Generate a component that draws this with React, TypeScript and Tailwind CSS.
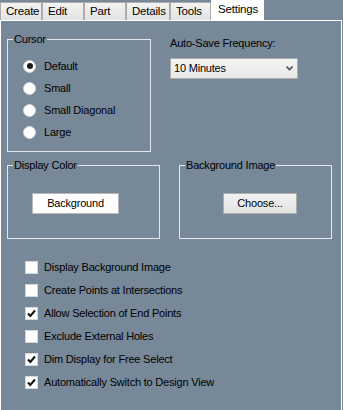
const tabs = [
  { name: 'Create', w: 'w-[42px]' },
  { name: 'Edit', w: 'w-[42px]' },
  { name: 'Part', w: 'w-[42px]' },
  { name: 'Details', w: 'w-[44px]' },
  { name: 'Tools', w: 'w-[41px]' },
]

const cursors = ['Default', 'Small', 'Small Diagonal', 'Large']

const options = [
  { label: 'Display Background Image', checked: false },
  { label: 'Create Points at Intersections', checked: false },
  { label: 'Allow Selection of End Points', checked: true },
  { label: 'Exclude External Holes', checked: false },
  { label: 'Dim Display for Free Select', checked: true },
  { label: 'Automatically Switch to Design View', checked: true },
]

function Radio({ label, selected }: { label: string; selected?: boolean }) {
  return (
    <div className="flex h-[22px] items-center gap-[8px] pl-[15px]">
      <span className="flex h-[13px] w-[13px] items-center justify-center rounded-full border border-[#d4d8dc] bg-white">
        {selected && <span className="h-[6px] w-[6px] rounded-full bg-[#1a1a1a]" />}
      </span>
      <span>{label}</span>
    </div>
  )
}

function Check({ label, checked }: { label: string; checked: boolean }) {
  return (
    <div className="flex h-[23px] items-center gap-[6px]">
      <span className="flex h-[13px] w-[13px] items-center justify-center border border-[#d4d8dc] bg-white">
        {checked && (
          <svg width="9" height="9" viewBox="0 0 9 9">
            <path d="M1 4.5 L3.3 7 L8 1.5" fill="none" stroke="#111" strokeWidth="2" />
          </svg>
        )}
      </span>
      <span>{label}</span>
    </div>
  )
}

function Group({ title, className, children }: { title: string; className: string; children: React.ReactNode }) {
  return (
    <fieldset className={`border border-[#e4e8ec] ${className}`}>
      <legend className="ml-[5px] px-[1px] leading-[13px]">{title}</legend>
      {children}
    </fieldset>
  )
}

export default function App() {
  return (
    <div className="flex h-[410px] w-[343px] flex-col bg-[#778899] font-['Liberation_Sans',Arial,sans-serif] text-[11px] tracking-[-0.2px] text-black">
      <div className="flex h-[20px] items-end">
        {tabs.map((tab) => (
          <div
            key={tab.name}
            className={`${tab.w} h-[18px] border border-b-0 border-[#acacac] bg-gradient-to-b from-[#f3f3f3] to-[#e3e3e3] pl-[5px] text-[11.5px] leading-[17px]`}
          >
            {tab.name}
          </div>
        ))}
        <div className="relative z-10 -mb-px h-[21px] w-[53px] bg-white pl-[7px] text-[11.5px] leading-[18px]">Settings</div>
      </div>

      <div className="flex w-[342px] flex-1 flex-col border-x border-t border-white">
        <div className="ml-[6px] mt-[12px] flex">
          <Group title="Cursor" className="h-[119px] w-[144px]">
            <div className="pt-[9px]">
              {cursors.map((c, i) => (
                <Radio key={c} label={c} selected={i === 0} />
              ))}
            </div>
          </Group>

          <div className="ml-[19px] pt-[4px]">
            <div className="leading-[13px]">Auto-Save Frequency:</div>
            <div className="mt-[8px] flex h-[21px] w-[128px] items-center justify-between border border-[#acacac] bg-gradient-to-b from-[#f4f4f4] to-[#e8e8e8] pl-[3px] pr-[4px]">
              <span>10 Minutes</span>
              <svg width="7" height="5" viewBox="0 0 7 5">
                <path d="M0.5 0.5 L3.5 3.5 L6.5 0.5" fill="none" stroke="#555" strokeWidth="1.6" />
              </svg>
            </div>
          </div>
        </div>

        <div className="ml-[6px] mt-[7px] flex gap-[19px]">
          <Group title="Display Color" className="h-[80px] w-[153px]">
            <div className="ml-[24px] mt-[21px] flex h-[21px] w-[87px] items-center justify-center border border-[#b8b8b8] bg-white outline outline-1 -outline-offset-2 outline-white">
              Background
            </div>
          </Group>
          <Group title="Background Image" className="h-[80px] w-[153px]">
            <div className="ml-[43px] mt-[21px] flex h-[21px] w-[74px] items-center justify-center border border-[#acacac] bg-gradient-to-b from-[#f2f2f2] to-[#e3e3e3]">
              Choose...
            </div>
          </Group>
        </div>

        <div className="ml-[24px] mt-[17px]">
          {options.map((o) => (
            <Check key={o.label} label={o.label} checked={o.checked} />
          ))}
        </div>
      </div>
    </div>
  )
}
